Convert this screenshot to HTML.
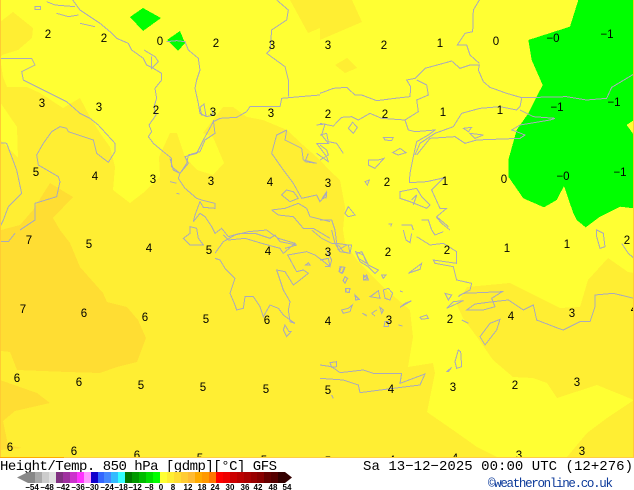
<!DOCTYPE html>
<html>
<head>
<meta charset="utf-8">
<title>Height/Temp. 850 hPa GFS</title>
<style>
html,body{margin:0;padding:0;background:#fff;width:634px;height:490px;overflow:hidden}
svg{position:absolute;left:0;top:0;display:block}
.c path,.c polyline{fill:none;stroke:#aaaabb;stroke-width:3}
.l text{font:11.5px "Liberation Sans",sans-serif;text-anchor:middle;fill:#000}
.t{font-family:"Liberation Mono",monospace;font-size:14px;fill:#000}
.s text{font:bold 8px "Liberation Sans",sans-serif;text-anchor:middle;fill:#000}
#bar{position:absolute;left:28px;top:472px;width:257px;height:11px;display:flex}
#bar i{flex:1 1 0;display:block;height:100%}
</style>
</head>
<body>
<svg width="634" height="458" viewBox="0 0 634 458" style="z-index:1">
<rect width="634" height="458" fill="#ffee33"/>
<g shape-rendering="crispEdges">
<polygon fill="#ffff33" points="0,0 634,0 634,273 628,272 608,258 588,280 580,307 560,308 510,283 467,287 457,305 463,318 477,337 493,360 513,377 533,378 547,383 557,398 597,385 634,400 607,418 587,433 567,457 497,457 477,447 453,430 427,412 435,373 433,363 408,367 413,337 410,310 383,287 357,260 345,243 343,230 345,207 340,180 330,171 320,160 303,145 287,130 263,120 247,117 233,107 223,107 203,133 213,137 224,163 213,175 197,170 185,157 177,133 170,133 159,157 160,177 143,193 130,203 113,190 115,167 110,147 100,133 90,117 80,98 63,108 40,93 27,87 7,87 3,77 0,57"/>
<polygon fill="#ffee33" points="0,22 13,12 33,28 32,38 18,50 2,55 0,57"/>
<polygon fill="#ffee33" points="290,0 308,33 320,28 320,40 362,22 352,0"/>
<polygon fill="#ffee33" points="335,65 347,58 357,68 345,73"/>
<polygon fill="#ffff33" points="0,102 17,127 18,158 0,140"/>
<polygon fill="#ffdd33" points="50,183 73,197 53,218 60,230 70,243 80,267 103,293 107,302 127,307 138,320 146,338 137,362 117,367 100,373 67,372 17,370 10,352 1,351 1,230 20,225 33,210"/>
<polygon fill="#ffdd33" points="0,380 37,393 50,403 15,411 3,421 8,445 22,448 0,450"/>
<g fill="#00ff00">
<polygon points="130,17 143,8 161,18 143,31"/>
<polygon points="167,40 180,31 185,43 178,51"/>
<polygon transform="translate(320,0) scale(.33333)" points="775,0 942,0 942,360 920,375 942,405 942,625 900,620 840,650 797,682 770,660 760,640 732,558 710,600 672,622 610,595 565,530 565,480 590,390 625,340 668,255 635,180 625,120 750,80"/>
</g>
</g>

<g class="c" shape-rendering="crispEdges" fill="none">
<g transform="scale(.33333)">
<path d="M218,0L240,30L270,50L300,70L330,95L350,115L385,130L395,150L430,175L440,195L460,205L485,220L485,240L465,265L470,295L462,320L468,345L447,375L455,395L445,410L460,430L490,455L515,475L515,500L540,520L565,490L555,470L590,460L610,420L640,365L660,355L710,352L740,335L750,320L800,320L840,320L845,295L900,290L960,285"/>
<path d="M830,0L865,30L860,60L815,90L810,150L800,160L855,200L865,240L865,290"/>
<path d="M500,125L530,122L555,125L565,150L595,175L600,210L590,240L585,265L595,310L600,340L620,350L640,345L635,330"/>
<path d="M600,322L605,345L618,347L612,312L600,322"/>
<path d="M140,5L165,15L225,20M170,40L205,50L235,45M240,70L285,80M105,20L122,20L122,28L105,28Z"/>
<path d="M432,150L465,170L475,185L455,205L455,170"/>
<path d="M0,175L95,175L105,195L65,215L70,240L130,270L200,305L240,340L270,355L295,375L345,430L345,455L325,487L290,460L280,420L205,395L200,385L180,380L155,395L130,430L110,465L115,495L175,530L180,545L170,590L105,610L105,660L60,690"/>
<path d="M0,428L20,430L50,510L65,580L25,620L10,660L0,680"/>
<path d="M0,725L25,725L45,700"/>
</g>
<g transform="translate(170,120) scale(.33333)">
<path d="M130,0L135,40L105,60L90,95L55,105L50,130L30,160L25,175L45,205L80,235L95,240L135,250L135,265L100,262L90,245L75,285L70,305L90,280L105,290L125,320L135,340L155,325L175,350L210,340L255,340L300,355L315,345L330,365L380,375L345,385"/>
<path d="M0,115L10,150L30,160"/>
<path d="M0,185L20,190M20,220L28,222"/>
<path d="M60,320L80,325L85,355L100,375L60,375L40,355L60,340Z"/>
<path d="M350,30L320,45L305,100L340,150L370,190L395,235L440,225L450,245L470,220L468,235"/>
<path d="M350,30L345,60L395,85L400,120L440,130L405,125L415,100"/>
<path d="M350,210L335,225L360,245L385,235L370,215Z"/>
<path d="M305,270L345,265L385,250L410,265L420,290L480,305M305,270L325,285L370,290L400,325L430,325L480,355"/>
<path d="M440,15L465,12L455,45L475,70L440,70L470,110L475,125L440,100"/>
</g>
<g transform="translate(215,230) scale(.33333)">
<path d="M0,85L15,90L30,115L60,145L45,190L60,225L65,240L85,235L90,200L115,200L135,230L145,260L165,225L190,235L205,255L240,280L225,275L220,240L225,215L205,180L185,120L210,125L235,165L255,150L280,130L265,120L245,125L218,75L275,65L300,75L320,90L345,110L350,90L335,60"/>
<path d="M0,70L25,35L60,15L100,5L155,0L175,15L190,25L240,40L205,70L195,55L140,40L90,25L40,30L25,15"/>
<path d="M210,285L222,305L228,305L215,320L205,300Z"/>
<path d="M280,98L285,105L272,105Z"/>
<path d="M375,110L388,112L380,130L372,125ZM390,140L398,145L390,160L384,152ZM392,176L404,176L402,188L392,186ZM420,196L432,208L422,210ZM380,240L400,235L412,225L405,245L385,250ZM422,65L445,75L455,100L430,85Z"/>
<path d="M442,250L455,256M470,250L480,258M445,145L455,135L460,150L445,150M465,200L480,190"/>
<path d="M290,0L320,25L350,40L365,40L370,60L395,45L410,45L405,70L385,65L370,45"/>
</g>
<g transform="translate(320,0) scale(.33333)">
<path d="M0,280L40,265L80,262L105,285L125,285L170,302L225,295L270,290L272,260L260,240L285,235L315,205L370,190L395,183L420,205L450,195L478,195L475,210L490,245L510,262L560,280L605,293L740,290L800,300L860,295L875,262L942,222"/>
<path d="M478,0L460,30L458,95L435,100L412,135L440,135L450,165L478,190"/>
<path d="M0,370L40,378L65,352L95,350L115,360L150,340L185,355L255,360L265,390L285,395L345,390L325,405L290,425L280,470L270,520L268,548L320,545L365,535L372,532L335,570L360,625L380,625L350,650L385,680"/>
<path d="M255,360L295,335L290,300L325,285L320,255L290,240"/>
<path d="M285,465L300,430L345,400L400,380L425,340L480,325L540,320L590,330L600,320L605,295"/>
<path d="M290,465L330,415L405,410L435,430L470,420L600,415L615,405L590,395L575,390L600,375L690,360L705,355L640,350L620,340L600,330"/>
<path d="M430,385L455,382L445,395ZM450,400L490,405L465,415ZM190,412L220,412L215,422L195,420ZM218,458L240,445L258,458L235,465Z"/>
<path d="M98,367L112,382L100,400L85,385Z"/>
<path d="M145,480L175,480L192,475L165,505L145,495Z"/>
<path d="M240,575L290,565L305,590L330,615L320,625L270,605L240,595Z"/>
<path d="M275,600L290,585L280,615"/>
<path d="M135,545L148,540L142,555ZM20,575L5,598L20,590Z"/>
<path d="M85,620L105,645L85,650L75,640Z"/>
<path d="M0,405L20,400L25,425L50,430L70,460M0,435L20,450L25,465L0,480"/>
<path d="M0,660L35,660L45,690M305,660L325,660L335,690M245,675L275,675L280,690M205,672L215,672L212,680"/>
<path d="M348,650L365,670L390,690"/>
</g>
<g transform="translate(320,230) scale(.33333)">
<path d="M45,0L50,40L85,45L90,70L60,65L45,40L35,0"/>
<path d="M0,90L25,85L30,110L15,110"/>
<path d="M250,0L258,30L270,38L275,10M290,20L330,45L370,40L410,65L410,100L340,90L345,100L400,110L410,150L455,160L450,180L420,195L415,200L430,190L547,185L515,205L525,230L490,240L440,240L465,222L520,215L565,210L610,240L640,225L650,270L715,295L730,300L780,275L810,275L825,230L825,195L880,190L942,205"/>
<path d="M335,0L345,15L370,5"/>
<path d="M480,320L510,280L540,268L530,300L495,345Z"/>
<path d="M0,405L35,410L60,428L130,420L160,430L245,430L240,460L315,432L300,465L220,475L120,488L115,465L70,450L0,445"/>
<path d="M30,398L50,395L50,410L35,412Z"/>
<path d="M415,360L422,365L425,410L410,415L405,395Z"/>
<path d="M380,425L395,412L385,425Z"/>
<path d="M110,70L125,65L145,105L175,120L165,130L145,110L120,95Z"/>
<path d="M65,110L75,112L68,130L58,125ZM75,140L82,145L75,160L70,152ZM78,176L90,176L88,188L78,186ZM105,195L118,208L108,210ZM65,240L85,235L97,225L90,245L70,250ZM130,135L143,145L130,150ZM185,135L198,135L190,145Z"/>
<path d="M150,200L175,182L180,205ZM190,180L205,175L218,190L210,210L195,205ZM240,232L275,212L255,220ZM155,250L170,240ZM180,232L190,240L185,250ZM128,250L140,258M240,183L248,186"/>
<path d="M265,130L305,100L300,118L270,128ZM300,262L320,255L325,265L305,268ZM195,275L205,275L205,290L192,290ZM235,285L248,288"/>
<path d="M375,190L395,195L385,210ZM380,235L430,212L400,215ZM425,270L445,280"/>
<path d="M830,0L850,10L855,50L840,55L830,20ZM905,40L925,70L942,85"/>
<path d="M35,495L40,505"/>
</g>
</g>

<g class="l">
<text x="48" y="38">2</text><text x="104" y="42">2</text><text x="160" y="45">0</text><text x="216" y="47">2</text><text x="272" y="49">3</text><text x="328" y="49">3</text><text x="384" y="49">2</text><text x="440" y="47">1</text><text x="496" y="45">0</text><text x="553" y="42">−0</text><text x="607" y="38">−1</text>
<text x="42" y="107">3</text><text x="99" y="111">3</text><text x="156" y="114">2</text><text x="213" y="116">3</text><text x="271" y="117">3</text><text x="328" y="118">2</text><text x="385" y="118">2</text><text x="443" y="116">1</text><text x="500" y="114">1</text><text x="557" y="111">−1</text><text x="614" y="106">−1</text>
<text x="36" y="176">5</text><text x="95" y="180">4</text><text x="153" y="183">3</text><text x="211" y="185">3</text><text x="270" y="186">4</text><text x="328" y="187">3</text><text x="387" y="186">2</text><text x="445" y="185">1</text><text x="504" y="183">0</text><text x="563" y="180">−0</text><text x="620" y="176">−1</text>
<text x="29" y="244">7</text><text x="89" y="248">5</text><text x="149" y="252">4</text><text x="209" y="254">5</text><text x="268" y="255">4</text><text x="328" y="256">3</text><text x="388" y="256">2</text><text x="447" y="254">2</text><text x="507" y="252">1</text><text x="567" y="248">1</text><text x="627" y="244">2</text>
<text x="23" y="313">7</text><text x="84" y="317">6</text><text x="145" y="321">6</text><text x="206" y="323">5</text><text x="267" y="324">6</text><text x="328" y="325">4</text><text x="389" y="324">3</text><text x="450" y="323">2</text><text x="511" y="320">4</text><text x="572" y="317">3</text><text x="634" y="313">4</text>
<text x="17" y="382">6</text><text x="79" y="386">6</text><text x="141" y="389">5</text><text x="203" y="391">5</text><text x="266" y="393">5</text><text x="328" y="394">5</text><text x="391" y="393">4</text><text x="453" y="391">3</text><text x="515" y="389">2</text><text x="577" y="386">3</text>
<text x="10" y="451">6</text><text x="74" y="455">6</text><text x="137" y="459">6</text><text x="200" y="462">5</text><text x="264" y="464">5</text><text x="328" y="465">5</text><text x="392" y="464">4</text><text x="455" y="462">4</text><text x="519" y="459">3</text><text x="582" y="455">3</text>
</g>
<g shape-rendering="crispEdges">
<rect x="0" y="0" width="1" height="458" fill="#ffcc33"/>
<rect x="633" y="0" width="1" height="458" fill="#ffcc33"/>
<rect x="0" y="457" width="634" height="1" fill="#ffcc44"/>
<rect x="0" y="457" width="64" height="1" fill="#ffaa00"/>
</g>
</svg>

<svg width="634" height="490" viewBox="0 0 634 490" style="z-index:2">
<text class="t" x="0" y="470" textLength="277" lengthAdjust="spacing">Height/Temp. 850 hPa [gdmp][°C] GFS</text>
<text class="t" x="363" y="470" textLength="270" lengthAdjust="spacing">Sa 13−12−2025 00:00 UTC (12+276)</text>
<text class="t" x="488" y="487" textLength="125" lengthAdjust="spacing" style="fill:#0c3a9a;font-size:12.5px">©weatheronline.co.uk</text>
<polygon points="17,477.5 28,472 28,483" fill="#888888"/>
<polygon points="285,472 292,477.5 285,483" fill="#330000"/>
<g class="s">
<text x="32" y="490">−54</text><text x="47" y="490">−48</text><text x="63" y="490">−42</text><text x="78" y="490">−36</text><text x="92" y="490">−30</text><text x="107" y="490">−24</text><text x="121" y="490">−18</text><text x="135" y="490">−12</text><text x="149" y="490">−8</text><text x="161" y="490">0</text><text x="173" y="490">8</text><text x="188" y="490">12</text><text x="202" y="490">18</text><text x="215" y="490">24</text><text x="230" y="490">30</text><text x="245" y="490">36</text><text x="258" y="490">42</text><text x="273" y="490">48</text><text x="287" y="490">54</text>
</g>
</svg>

<div id="bar" style="z-index:3">
<i style="background:#888888"></i><i style="background:#aaaaaa"></i><i style="background:#cccccc"></i><i style="background:#e0e0e0"></i>
<i style="background:#803080"></i><i style="background:#a030a0"></i><i style="background:#cc33cc"></i><i style="background:#ff33ff"></i><i style="background:#ff99ff"></i>
<i style="background:#1100cc"></i><i style="background:#3366ff"></i><i style="background:#4488ff"></i><i style="background:#33bbff"></i><i style="background:#33ffff"></i>
<i style="background:#007700"></i><i style="background:#009900"></i><i style="background:#00bb00"></i><i style="background:#00dd00"></i><i style="background:#00ff00"></i>
<i style="background:#ffff33"></i><i style="background:#ffee33"></i><i style="background:#ffdd33"></i><i style="background:#ffcc33"></i><i style="background:#ffbb33"></i><i style="background:#ffaa00"></i><i style="background:#ff9900"></i><i style="background:#ff7700"></i>
<i style="background:#ff0000"></i><i style="background:#ee0000"></i><i style="background:#cc0000"></i><i style="background:#bb0000"></i><i style="background:#aa0000"></i><i style="background:#990000"></i><i style="background:#880000"></i><i style="background:#660000"></i><i style="background:#550000"></i><i style="background:#330000"></i>
</div>
</body>
</html>
